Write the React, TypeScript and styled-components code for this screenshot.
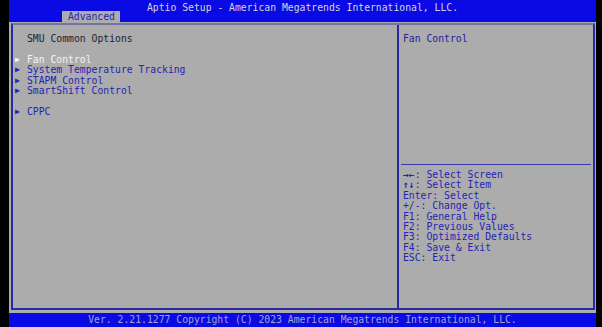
import React from 'react';
import styled, { createGlobalStyle } from 'styled-components';

const GlobalStyle = createGlobalStyle`
  html, body {
    margin: 0;
    padding: 0;
    background: #000;
  }
  #root {
    width: 602px;
    height: 327px;
  }
`;

const BLUE = '#0a0ae4';
const GRAY = '#acacac';
const INK = '#2424b4';

const Screen = styled.div`
  display: flex;
  flex-direction: column;
  width: 587px;
  height: 327px;
  margin-left: 9px;
  font-family: 'DejaVu Sans Mono', 'Liberation Mono', monospace;
  font-size: 9.75px;
  line-height: 10.4px;
  white-space: pre;
`;

const TitleBar = styled.div`
  display: flex;
  flex-direction: column;
  background: ${BLUE};
  height: 22px;
`;

const TitleRow = styled.div`
  height: 11px;
  padding-top: 3px;
  box-sizing: border-box;
  text-align: center;
  color: #d4d4dc;
`;

const TabRow = styled.div`
  display: flex;
  height: 11px;
  padding-left: 53px;
  align-items: flex-end;
`;

const Tab = styled.div`
  background: ${GRAY};
  color: ${INK};
  height: 11px;
  padding: 0 5px 0 6px;
  line-height: 12px;
`;

const Main = styled.div`
  flex: 1;
  background: ${GRAY};
  padding: 1px 1px 3px 2px;
  display: flex;
  min-height: 0;
`;

const Panel = styled.div`
  flex: 1;
  display: grid;
  grid-template-columns: 386px 1fr;
  border: 2px solid #2a2aa0;
  border-top-color: #7474a4;
`;

const LeftPane = styled.div`
  padding: 9px 0 0 2px;
  border-right: 2px solid #2a2aa0;
`;

const Heading = styled.div<{ $gap?: boolean }>`
  color: #22222e;
  height: 10.4px;
  padding-left: 12px;
  margin-bottom: ${(p) => (p.$gap ? '10.4px' : '0')};
`;

const Item = styled.div<{ $selected?: boolean; $spaced?: boolean }>`
  display: flex;
  align-items: center;
  height: 10.4px;
  color: ${(p) => (p.$selected ? '#f4f4f4' : INK)};
  margin-top: ${(p) => (p.$spaced ? '10.4px' : '0')};
`;

const Arrow = styled.span`
  display: inline-block;
  width: 12px;
  font-size: 8px;
  line-height: 10px;
`;

const RightPane = styled.div`
  display: flex;
  flex-direction: column;
  padding: 0 2px 0 2px;
`;

const HelpText = styled.div`
  height: 139px;
  padding: 9px 0 0 2px;
  box-sizing: border-box;
  color: #22229c;
`;

const Rule = styled.div`
  height: 1px;
  background: #3a3aa8;
  margin: 0 0 5px 0;
`;

const Keys = styled.div`
  color: ${INK};
  padding-left: 2px;
`;

const KeyGlyph = styled.span`
  font-weight: bold;
`;

const Footer = styled.div`
  height: 14px;
  background: ${BLUE};
  color: #a4a4cc;
  text-align: center;
  line-height: 14px;
`;

const items = [
  { label: 'Fan Control', selected: true },
  { label: 'System Temperature Tracking' },
  { label: 'STAPM Control' },
  { label: 'SmartShift Control' },
  { label: 'CPPC', spaced: true },
];

const keys: [string, string][] = [
  ['→←', ': Select Screen'],
  ['↑↓', ': Select Item'],
  ['', 'Enter: Select'],
  ['', '+/-: Change Opt.'],
  ['', 'F1: General Help'],
  ['', 'F2: Previous Values'],
  ['', 'F3: Optimized Defaults'],
  ['', 'F4: Save & Exit'],
  ['', 'ESC: Exit'],
];

export default function App() {
  return (
    <>
      <GlobalStyle />
      <Screen>
        <TitleBar>
          <TitleRow>Aptio Setup - American Megatrends International, LLC.</TitleRow>
          <TabRow>
            <Tab>Advanced</Tab>
          </TabRow>
        </TitleBar>
        <Main>
          <Panel>
            <LeftPane>
              <Heading $gap>SMU Common Options</Heading>
              {items.map((it) => (
                <Item key={it.label} $selected={it.selected} $spaced={it.spaced}>
                  <Arrow>▶</Arrow>
                  {it.label}
                </Item>
              ))}
            </LeftPane>
            <RightPane>
              <HelpText>Fan Control</HelpText>
              <Rule />
              <Keys>
                {keys.map(([g, t]) => (
                  <div key={t}>
                    {g && <KeyGlyph>{g}</KeyGlyph>}
                    {t}
                  </div>
                ))}
              </Keys>
            </RightPane>
          </Panel>
        </Main>
        <Footer>Ver. 2.21.1277 Copyright (C) 2023 American Megatrends International, LLC.</Footer>
      </Screen>
    </>
  );
}
